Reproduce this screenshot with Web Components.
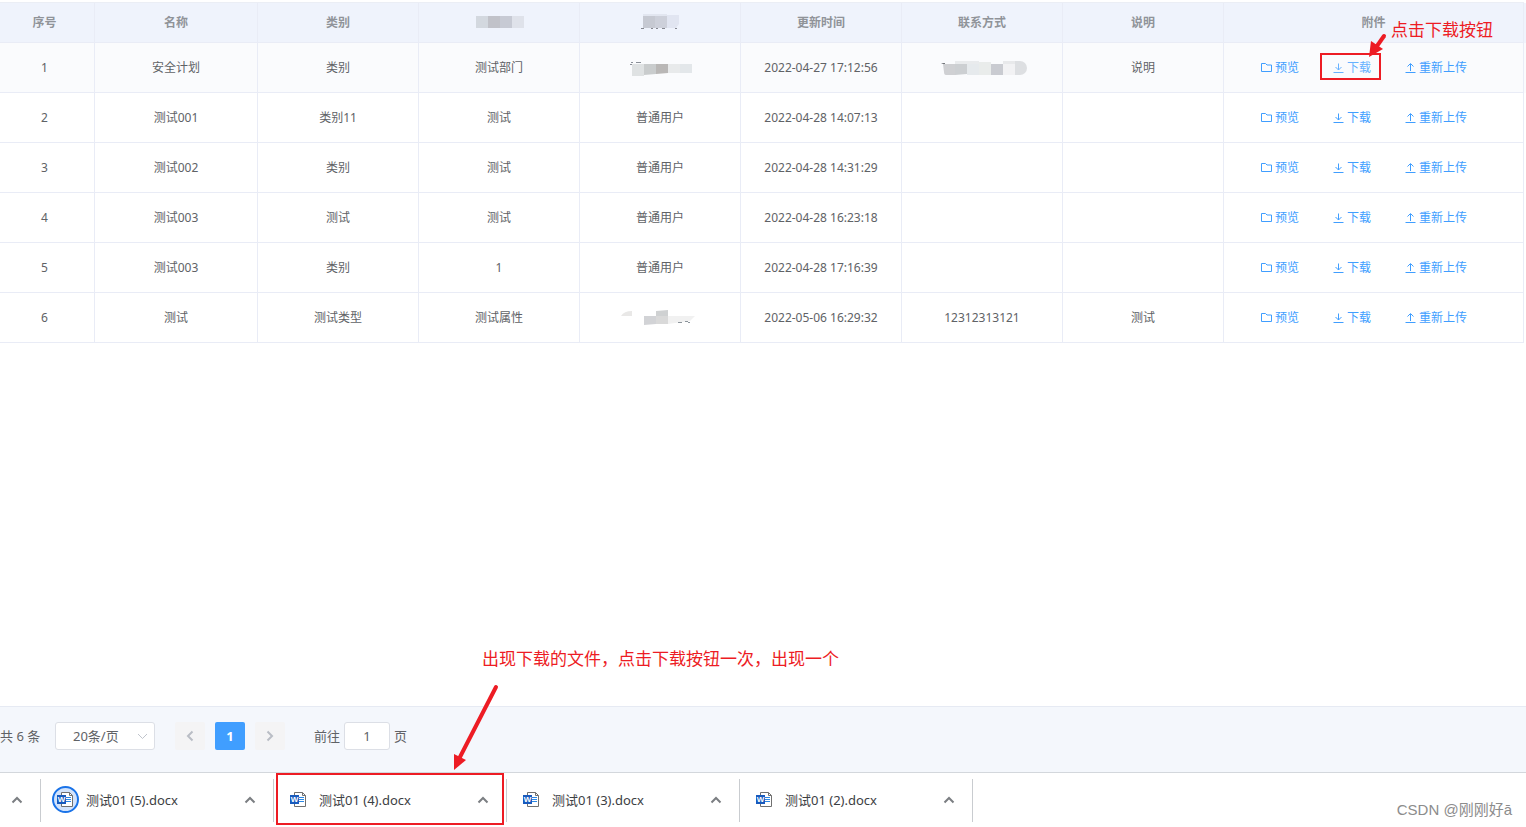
<!DOCTYPE html>
<html lang="zh-CN">
<head>
<meta charset="utf-8">
<title>附件管理</title>
<style>
  html, body { margin: 0; height: 100%; }
  body { font-family: "Noto Sans", "Noto Sans CJK SC", sans-serif; color: #606266; background: #fff; }
</style>
</head>
<body>
<doc-page></doc-page>

<script>
const define = (name, html, setup) => customElements.define(name, class extends HTMLElement {
  connectedCallback() {
    if (this.shadowRoot) return;
    this.attachShadow({ mode: "open" }).innerHTML = html;
    if (setup) setup(this, this.shadowRoot);
  }
});

/* Redacted values: runs of flat grey blocks */
const MOSAICS = {
  head1: `<svg width="50" height="14"><path fill="#d3d8df" d="M2 0h12v12H2z"/><path fill="#c1c2c9" d="M14 0h12v12H14z"/><path fill="#c7cad4" d="M26 0h12v12H26z"/><path fill="#dfe2ea" d="M38 0h12v12H38z"/></svg>`,
  head2: `<svg width="40" height="18"><g transform="translate(1 0)"><path fill="#e2e6f0" d="M2 0h24v3H2z"/><path fill="#c6c9d2" d="M2 2h12v12H2z"/><path fill="#cdd0da" d="M14 2h12v12H14z"/><path fill="#e1e5f1" d="M26 1h12v9l-3 4h-9z"/><path fill="#85878f" d="M0 14h3v1H0zM10 14h2v1h-2zM15 14h2v1h-2zM21 14h3v1h-3zM34 14h2v1h-2z"/></g></svg>`,
  user: `<svg width="64" height="16"><g transform="translate(0 2)"><path fill="#8b9098" d="M3 0h2v1H3zM8 0h5v1H8zM2 2h2v1H2z"/><path fill="#dfe2e3" d="M4 2h12v12H4z"/><path fill="#c9cccd" d="M16 2h12v10l-12 1z"/><path fill="#b9b7b6" d="M28 2h12v9l-12 1z"/><path fill="#e8eaeb" d="M40 2h12v9H40z"/><path fill="#e3e7ea" d="M52 2h12v9H52z"/></g></svg>`,
  phone: `<svg width="90" height="14"><g transform="translate(4 0)"><path fill="#73767b" d="M0 3l2-1h2v2H3V3z"/><path fill="#cfd0d3" d="M2 3h12v11H5q-2 0-2-3z"/><path fill="#cccfd2" d="M14 3h12v10l-12 1z"/><path fill="#e9ebed" d="M14 0h24v3H14z"/><path fill="#e6eaed" d="M26 3h12v11H26z"/><path fill="#e9eceb" d="M38 1h12v13H38z"/><path fill="#c9cbd1" d="M50 3h12v11H50z"/><path fill="#e8e9eb" d="M62 0h12v3H62z"/><path fill="#f2f2f4" d="M62 3h12v11H62z"/><path fill="#dddfe2" d="M74 0h5a7 7 0 0 1 0 14h-5z"/></g></svg>`,
  user2: `<svg width="78" height="16"><path fill="#e9e8e7" d="M0 6q3-5 11-5v5z"/><path fill="#d2d3d6" d="M23 6h12v8l-12 1z"/><path fill="#cfd1d2" d="M35 1l12-1v6H35z"/><path fill="#d9d9d9" d="M35 6h12v8H35z"/><path fill="#f1f1f1" d="M47 6h27l-5 5-22 3z"/><path fill="#8d959c" d="M57 12h4v1h-4zM64 11h3v1h-3zM67 12h2v1h-2z"/></svg>`
};
define("mosaic-block", `<style>:host{display:inline-block;vertical-align:middle;line-height:0}svg{display:block}</style><span></span>`,
  (el, root) => { root.querySelector("span").innerHTML = MOSAICS[el.getAttribute("kind")]; });

const LINE_ICONS = {
  folder: `<path d="M.5 9.500v-8h4l1.500 1.500h4.500v6.500z"/>`,
  download: `<path d="M.5 10.500h10M5.500 1.500v6.500M2.500 5l3 3 3-3"/>`,
  upload: `<path d="M.5 10.500h10M5.500 9V2M2.500 4.500l3-3 3 3"/>`
};
define("icon-button", `<style>
  :host{display:block}
  button{display:flex;align-items:center;gap:3px;margin:0;padding:0;border:0;background:none;font:inherit;font-size:12px;line-height:16px;color:#409eff;cursor:pointer}
  :host([active]) button{color:#66b1ff}
  svg{flex:none;fill:none;stroke:currentColor;stroke-width:1}
</style><button type="button"><svg width="11" height="12" viewBox="0 0 11 12" aria-hidden="true"></svg><span><slot></slot></span></button>`,
  (el, root) => { root.querySelector("svg").innerHTML = LINE_ICONS[el.getAttribute("icon")]; });

define("row-actions", `<style>
  :host{display:flex;justify-content:center;gap:34px;padding-right:19px}
</style>
<icon-button icon="folder">预览</icon-button><icon-button icon="download" class="dl">下载</icon-button><icon-button icon="upload">重新上传</icon-button>`,
  (el, root) => { if (el.hasAttribute("active")) root.querySelector(".dl").setAttribute("active", ""); });

const m = k => `<mosaic-block kind="${k}"></mosaic-block>`;
const HEAD = ["序号", "名称", "类别", m("head1"), m("head2"), "更新时间", "联系方式", "说明", "附件"];
const ROWS = [
  ["1", "安全计划", "类别", "测试部门", m("user"), "2022-04-27 17:12:56", m("phone"), "说明"],
  ["2", "测试001", "类别11", "测试", "普通用户", "2022-04-28 14:07:13", "", ""],
  ["3", "测试002", "类别", "测试", "普通用户", "2022-04-28 14:31:29", "", ""],
  ["4", "测试003", "测试", "测试", "普通用户", "2022-04-28 16:23:18", "", ""],
  ["5", "测试003", "类别", "1", "普通用户", "2022-04-28 17:16:39", "", ""],
  ["6", "测试", "测试类型", "测试属性", m("user2"), "2022-05-06 16:29:32", "12312313121", "测试"]
];
define("file-table", `<style>
  :host{display:block;padding:2px 2px 0 0}
  table{width:100%;table-layout:fixed;border-collapse:separate;border-spacing:0;border-top:1px solid #ebeef5;font-size:12px;line-height:16px}
  th,td{box-sizing:border-box;padding:0;text-align:center;vertical-align:middle;border-right:1px solid #e9ecf6;border-bottom:1px solid #e9ecf6}
  th{height:40px;color:#909399;font-weight:700;background:#eff3fc}
  td{height:50px}
  th:first-child,td:first-child{padding-right:5px}
  .current td{background:#fafbfd}
  th:last-child{box-shadow:2px 0 #eff3fc}
  .current td:last-child{box-shadow:2px 0 #fafbfd}
  .index{width:95px}.name{width:163px}.files{width:300px}
</style>
<table>
  <colgroup><col class="index"><col class="name"><col span="6"><col class="files"></colgroup>
  <thead><tr>${HEAD.map(h => `<th scope="col">${h}</th>`).join("")}</tr></thead>
  <tbody>${ROWS.map((r, i) => `<tr${i ? "" : ' class="current"'}>${r.map(c => `<td>${c}</td>`).join("")}<td><row-actions${i ? "" : " active"}></row-actions></td></tr>`).join("")}</tbody>
</table>`);

define("page-bar", `<style>
  :host{display:flex;align-items:flex-start;height:50px;padding-top:15px;border-top:1px solid #e6eaf3;background:#f4f7fc;font-size:13px;line-height:28px;color:#606266}
  .total{width:55px;white-space:nowrap}
  .size{position:relative;width:100px;height:28px}
  select,input{box-sizing:border-box;height:28px;margin:0;border:1px solid #dcdfe6;border-radius:3px;background:#fff;font:inherit;font-size:13px;line-height:26px;color:#606266}
  select{display:block;width:100%;padding:0 0 0 17px;appearance:none}
  .size svg{position:absolute;right:7px;top:9px;pointer-events:none}
  svg{display:block;fill:none;stroke:#c0c4cc;stroke-width:1}
  nav{display:flex;gap:10px;margin:0 29px 0 20px}
  button{display:flex;align-items:center;justify-content:center;width:30px;height:28px;margin:0;padding:0;border:0;border-radius:2px;background:#f4f4f5;font:inherit;font-weight:700}
  button[aria-current]{background:#409eff;color:#fff}
  nav svg{stroke:#b9bdc5;stroke-width:2}
  .jump{display:flex;gap:4px}
  input{width:46px;padding:0;text-align:center}
</style>
<span class="total">共 6 条</span>
<span class="size"><select aria-label="每页条数"><option>20条/页</option><option>50条/页</option></select><svg width="11" height="10" viewBox="0 0 11 10"><path d="M1 3l4.500 4.500L10 3"/></svg></span>
<nav aria-label="分页">
  <button type="button" disabled aria-label="上一页"><svg width="10" height="12" viewBox="0 0 10 12"><path d="M7.500 1.500L3 6l4.500 4.500"/></svg></button>
  <button type="button" aria-current="page">1</button>
  <button type="button" disabled aria-label="下一页"><svg width="10" height="12" viewBox="0 0 10 12"><path d="M2.500 1.500L7 6l-4.500 4.500"/></svg></button>
</nav>
<span class="jump"><label for="page">前往</label><input id="page" type="text" value="1"><span>页</span></span>`);

const CHEVRON = `<svg width="12" height="8" viewBox="0 0 12 8" aria-hidden="true"><path d="M1.500 6.500L6 2l4.500 4.500" fill="none" stroke="#7b7e82" stroke-width="2"/></svg>`;
define("download-item", `<style>
  :host{display:flex;align-items:center;box-sizing:border-box;width:233px;height:43px;padding:0 17px 2px 11px;border-right:1px solid #c9ccd0}
  .icon{display:flex;align-items:center;justify-content:center;box-sizing:border-box;width:27px;height:27px;border-radius:50%}
  :host([recent]) .icon{border:2px solid #1a73e8;background:#d2e3fc}
  a{flex:1;margin-left:7px;font-size:13px;line-height:20px;color:#3c4043;text-decoration:none;white-space:nowrap}
  button{display:flex;margin:0;padding:0;border:0;background:none}
  svg{display:block}
</style>
<span class="icon"><svg width="17" height="17" viewBox="0 0 17 17" aria-hidden="true">
  <path d="M4.500 1.500h8l3 3v11h-11z" fill="#fff" stroke="#707070" stroke-linejoin="round"/>
  <path d="M12.500 1.500v3h3" fill="none" stroke="#707070"/>
  <path d="M9 6.500h5M9 8.500h5M9 10.500h5" stroke="#2b88e6"/>
  <path d="M0 4h9v9H0z" fill="#185abd"/>
  <text x="4.500" y="11" text-anchor="middle" font-family="Liberation Sans, sans-serif" font-weight="700" font-size="8" fill="#fff">W</text>
</svg></span>
<a href="#"><slot></slot></a>
<button type="button" aria-label="更多选项">${CHEVRON}</button>`);

define("download-shelf", `<style>
  :host{display:flex;align-items:flex-start;height:48px;padding-top:6px;border-top:1px solid #d3d7dc;background:#fff}
  button{display:flex;align-items:center;box-sizing:border-box;width:41px;height:43px;margin:0;padding:0 0 2px 11px;border:0;border-right:1px solid #c9ccd0;background:none}
</style>
<button type="button" aria-label="展开">${CHEVRON}</button><slot></slot>`);

/* Red notes laid over the page: a text, an arrow and a frame round the target */
define("callout-note", `<style>
  :host{position:absolute;pointer-events:none;color:#ed1c24}
  p{position:absolute;margin:0;font-size:17px;line-height:24px;white-space:nowrap}
  i{position:absolute;box-sizing:border-box;border:2px solid #ed1c24}
  svg{position:absolute;fill:#ed1c24;stroke:#ed1c24;stroke-linecap:round}
  :host([kind=button]){top:18px;right:33px;width:173px;height:62px}
  :host([kind=button]) p{right:0;top:0}
  :host([kind=button]) i{left:0;bottom:0;width:61px;height:27px}
  :host([kind=button]) svg{left:48px;top:14px}
  :host([kind=file]){left:276px;bottom:2px;width:564px;height:178px}
  :host([kind=file]) p{left:206px;top:0}
  :host([kind=file]) i{left:0;bottom:0;width:228px;height:52px}
  :host([kind=file]) svg{left:176px;top:37px}
</style><p><slot></slot></p><i></i><span></span>`,
  (el, root) => {
    root.querySelector("span").innerHTML = el.getAttribute("kind") === "button"
      ? `<svg width="20" height="26"><path d="M16 4L9 14" stroke-width="4"/><path d="M1 25L3 9l12 8z" stroke="none"/></svg>`
      : `<svg width="48" height="86"><path d="M44 3L8 73" stroke-width="4"/><path d="M2 86L2 70l12 6z" stroke="none"/></svg>`;
  });

define("water-mark", `<style>
  :host{position:absolute;right:14px;bottom:5px;font:15px/24px "Liberation Sans","Noto Sans CJK SC",sans-serif;color:#8c8c8c;pointer-events:none;white-space:nowrap}
</style><slot></slot>`);

define("doc-page", `<style>
  :host{position:relative;display:flex;flex-direction:column;min-height:100vh;overflow:hidden}
  main{flex:1}
</style>
<main><file-table></file-table></main>
<page-bar></page-bar>
<download-shelf>
  <download-item recent>测试01 (5).docx</download-item>
  <download-item>测试01 (4).docx</download-item>
  <download-item>测试01 (3).docx</download-item>
  <download-item>测试01 (2).docx</download-item>
</download-shelf>
<callout-note kind="button">点击下载按钮</callout-note>
<callout-note kind="file">出现下载的文件，点击下载按钮一次，出现一个</callout-note>
<water-mark>CSDN @刚刚好ā</water-mark>`);
</script>
</body>
</html>
